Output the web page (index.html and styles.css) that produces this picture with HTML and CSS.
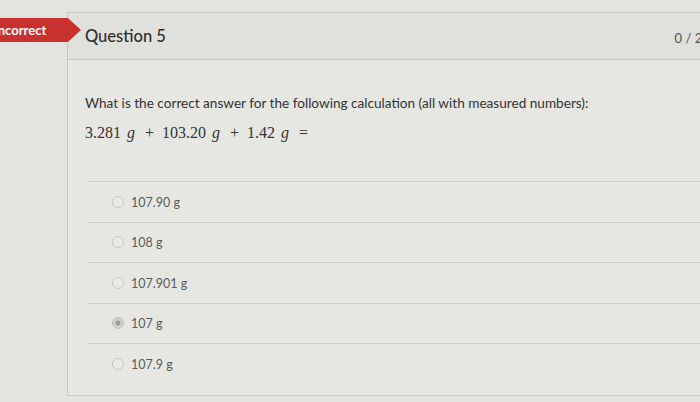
FILE: index.html
```html
<!DOCTYPE html>
<html>
<head>
<meta charset="utf-8">
<link rel="stylesheet" href="styles.css">
</head>
<body>
<div class="page">
  <div class="badge">Incorrect</div>
  <div class="card">
    <div class="card-head">
      <span class="title">Question 5</span>
      <span class="score">0 / 2 pts</span>
    </div>
    <div class="card-body">
      <p class="prompt">What is the correct answer for the following calculation (all with measured numbers):</p>
      <p class="math"><span>3.281</span> <i>g</i> <span class="op">+</span> <span>103.20</span> <i>g</i> <span class="op">+</span> <span>1.42</span> <i>g</i> <span class="op">=</span></p>
      <ul class="answers">
        <li class="answer"><span class="radio"></span><span class="label">107.90 g</span></li>
        <li class="answer"><span class="radio"></span><span class="label">108 g</span></li>
        <li class="answer"><span class="radio"></span><span class="label">107.901 g</span></li>
        <li class="answer"><span class="radio checked"></span><span class="label">107 g</span></li>
        <li class="answer"><span class="radio"></span><span class="label">107.9 g</span></li>
      </ul>
    </div>
  </div>
</div>
</body>
</html>
```
FILE: styles.css
```css
html, body {
  margin: 0;
  padding: 0;
  width: 700px;
  height: 402px;
  overflow: hidden;
  background: #e3e3df;
  font-family: Lato, "Liberation Sans", sans-serif;
}
.page {
  position: relative;
  padding: 12px 0 0 67px;
}
.badge {
  position: absolute;
  left: -20px;
  top: 18px;
  height: 24px;
  width: 101px;
  padding-left: 14px;
  box-sizing: border-box;
  background: #c9312f;
  color: #fff;
  font-weight: 700;
  font-size: 13px;
  line-height: 24px;
  clip-path: polygon(0 0, 87% 0, 100% 50%, 87% 100%, 0 100%);
}
.card {
  width: 660px;
  height: 384px;
  box-sizing: border-box;
  border: 1px solid #c6c6c2;
  border-right: none;
  background: #e6e7e3;
}
.card-head {
  height: 46px;
  display: flex;
  align-items: center;
  justify-content: space-between;
  padding: 0 0 0 17px;
  background: #e0e0dc;
  border-bottom: 1px solid #c4c4c0;
}
.title {
  font-size: 16.5px;
  color: #2e2e2e;
  font-weight: 500;
}
.score {
  font-size: 13px;
  color: #555;
  margin-top: 4px;
  margin-right: 4px;
  white-space: nowrap;
}
.card-body {
  padding: 34px 0 0 17px;
}
.prompt {
  margin: 0;
  font-size: 13.6px;
  color: #333;
  line-height: 18px;
}
.math {
  margin: 11px 0 0 0;
  font-family: "Liberation Serif", "DejaVu Serif", serif;
  font-size: 16px;
  color: #333;
  line-height: 20px;
}
.math i {
  font-style: italic;
  margin: 0 2px;
}
.math .op {
  margin: 0 4px;
}
.answers {
  list-style: none;
  margin: 38px 0 0 3px;
  padding: 0;
}
.answer {
  height: 39.5px;
  border-top: 1px solid #cdcdc9;
  display: flex;
  align-items: center;
  padding-left: 24px;
  gap: 7px;
  font-size: 12.5px;
  color: #5a5a5a;
}
.radio {
  width: 10px;
  height: 10px;
  border-radius: 50%;
  border: 1px solid #c7c7c3;
  background: #e9e9e6;
}
.radio.checked {
  background: radial-gradient(circle, #9a9a98 0 2px, #cfcfcc 3px);
  border-color: #c0c0bd;
}
.label {
  padding-top: 1px;
}
```
